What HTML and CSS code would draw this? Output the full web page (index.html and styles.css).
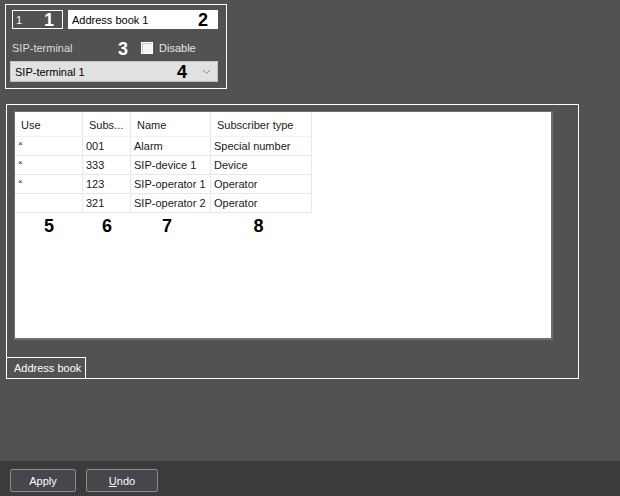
FILE: index.html
```html
<!DOCTYPE html>
<html lang="en">

<head>
    <meta charset="UTF-8">
    <title>Address book</title>
    <link rel="stylesheet" href="styles.css">
</head>

<body>
    <div class="content">
        <!-- Address book settings -->
        <div class="settings-panel">
            <div class="settings-row">
                <div class="field field-id">
                    <span>1</span>
                    <span class="callout">1</span>
                </div>
                <div class="field field-name">
                    <span>Address book 1</span>
                    <span class="callout dark">2</span>
                </div>
            </div>
            <div class="settings-row terminal-row">
                <span class="label">SIP-terminal</span>
                <span class="callout">3</span>
                <label class="check">
                    <span class="check-box"></span>
                    <span>Disable</span>
                </label>
            </div>
            <div class="combo">
                <span>SIP-terminal 1</span>
                <span class="callout dark">4</span>
                <svg class="chevron" width="9" height="6" viewBox="0 0 9 6">
                    <polyline points="1,1 4.5,4.5 8,1" fill="none" stroke="#8a8a8a" stroke-width="1"/>
                </svg>
            </div>
        </div>

        <!-- Tab panel -->
        <div class="tab-panel">
            <div class="list-view">
                <div class="grid">
                    <div class="head">Use</div>
                    <div class="head">Subs...</div>
                    <div class="head">Name</div>
                    <div class="head">Subscriber type</div>

                    <div class="cell"><span class="mark">×</span></div>
                    <div class="cell">001</div>
                    <div class="cell">Alarm</div>
                    <div class="cell">Special number</div>

                    <div class="cell"><span class="mark">×</span></div>
                    <div class="cell">333</div>
                    <div class="cell">SIP-device 1</div>
                    <div class="cell">Device</div>

                    <div class="cell"><span class="mark">×</span></div>
                    <div class="cell">123</div>
                    <div class="cell">SIP-operator 1</div>
                    <div class="cell">Operator</div>

                    <div class="cell"></div>
                    <div class="cell">321</div>
                    <div class="cell">SIP-operator 2</div>
                    <div class="cell">Operator</div>

                    <div class="num">5</div>
                    <div class="num">6</div>
                    <div class="num">7</div>
                    <div class="num">8</div>
                </div>
            </div>
            <div class="tab">Address book</div>
        </div>
    </div>

    <!-- Bottom bar -->
    <div class="bottom-bar">
        <button class="btn btn-apply">Apply</button>
        <button class="btn btn-undo"><u>U</u>ndo</button>
    </div>
</body>

</html>
```

FILE: styles.css
```css
/* Global Styles */

* {
    box-sizing: border-box;
    margin: 0;
    padding: 0;
}

html,
body {
    height: 100%;
}

body {
    background-color: #525252;
    font-family: "Liberation Sans", Arial, sans-serif;
    font-size: 11px;
    color: #ffffff;
    display: flex;
    flex-direction: column;
    overflow: hidden;
}

.content {
    flex: 1;
}

/* Settings panel */

.settings-panel {
    margin: 4px 0 0 5px;
    width: 222px;
    height: 85px;
    border: 1px solid #ffffff;
    padding: 5px 0 0 4px;
}

.settings-row {
    display: flex;
    align-items: center;
}

.field {
    height: 19px;
    border: 1px solid #ffffff;
    display: flex;
    align-items: center;
    justify-content: space-between;
    font-size: 11px;
}

.field-id {
    width: 51px;
    margin-left: 2px;
    padding: 0 8px 0 3px;
    color: #ffffff;
}

.field-name {
    width: 150px;
    margin-left: 5px;
    background-color: #ffffff;
    padding: 0 9px 0 3px;
    color: #000000;
}

.callout {
    font-weight: bold;
    font-size: 18px;
    line-height: 1;
    color: #ffffff;
}

.callout.dark {
    color: #000000;
}

.terminal-row {
    margin-top: 11px;
    height: 15px;
}

.label {
    margin-left: 2px;
    color: #dcdcdc;
    width: 106px;
}

.terminal-row .callout {
    margin-top: 3px;
}

.check {
    display: flex;
    align-items: center;
    margin-left: 13px;
    color: #e6e6e6;
}

.check-box {
    width: 12px;
    height: 12px;
    border: 1px solid #ffffff;
    background-color: #f4f4f4;
    box-shadow: inset 1px 1px 0 #c8c8c8;
    margin-right: 6px;
}

.combo {
    margin-top: 6px;
    width: 208px;
    height: 21px;
    background-color: #e1e1e1;
    border: 1px solid #c4c4c4;
    color: #000000;
    display: flex;
    align-items: center;
    padding: 0 6px 0 4px;
}

.combo span:first-child {
    flex: 1;
}

.combo .callout {
    margin-right: 15px;
}

/* Tab panel */

.tab-panel {
    margin: 15px 0 0 6px;
    width: 573px;
    height: 275px;
    border: 1px solid #ffffff;
    padding: 6px 0 0 7px;
    display: flex;
    flex-direction: column;
}

.list-view {
    width: 539px;
    height: 229px;
    background-color: #ffffff;
    border: 1px solid #6c6f76;
    border-width: 1px 2px 2px 1px;
    color: #000000;
}

.grid {
    display: grid;
    grid-template-columns: 68px 48px 80px 101px;
    grid-template-rows: 25px repeat(4, 19px) 24px;
}

.head {
    border-right: 1px solid #e8e8e8;
    border-bottom: 1px solid #f2f2f2;
    padding: 7px 0 0 6px;
    color: #1a1a1a;
}

.cell {
    border-right: 1px solid #e8e8e8;
    border-bottom: 1px solid #e8e8e8;
    padding: 3px 0 0 3px;
    color: #1a1a1a;
}

.mark {
    font-size: 8px;
    vertical-align: top;
    position: relative;
    top: -1px;
}

.num {
    text-align: center;
    font-weight: bold;
    font-size: 18px;
    padding-top: 3px;
}

.num:nth-last-child(2) {
    padding-right: 8px;
}

.num:last-child {
    padding-right: 6px;
}

.tab {
    margin-top: auto;
    margin-left: -7px;
    width: 79px;
    height: 21px;
    border: 1px solid #ffffff;
    border-bottom: none;
    border-left: none;
    padding: 4px 0 0 7px;
    color: #ffffff;
}

/* Bottom bar */

.bottom-bar {
    height: 35px;
    background-color: #3b3b3b;
    display: flex;
    gap: 10px;
    padding: 8px 0 0 10px;
}

.btn {
    height: 23px;
    background-color: #46464d;
    border: 1px solid #8a8a8f;
    border-radius: 2px;
    color: #ffffff;
    font-family: "Liberation Sans", Arial, sans-serif;
    font-size: 11px;
    cursor: pointer;
}

.btn-apply {
    width: 66px;
}

.btn-undo {
    width: 72px;
}
```
